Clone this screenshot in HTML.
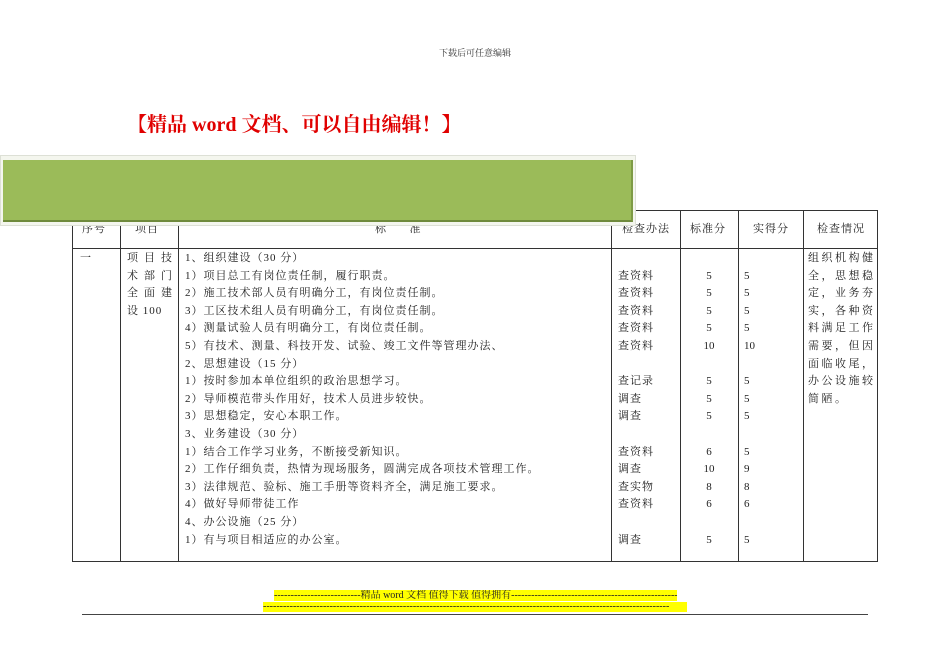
<!DOCTYPE html>
<html><head><meta charset="utf-8"><style>
*{margin:0;padding:0}
body{width:950px;height:672px;background:#fff;position:relative;overflow:hidden;font-family:"Liberation Serif","Noto Serif CJK SC",serif;color:#222}
.a{position:absolute;white-space:nowrap}
.h{position:absolute;background:#333;height:1px}
.v{position:absolute;background:#333;width:1px}
.t{font-size:11px;letter-spacing:1px;line-height:17.6px}
</style></head><body>
<div class="a" style="left:0;width:950px;top:46px;text-align:center;font-size:9px;color:#333">下载后可任意编辑</div>
<div class="a" style="left:127px;top:108px;font-size:20px;font-weight:bold;color:#e00000;font-family:'Liberation Serif','Noto Serif CJK SC',serif">【精品 word 文档、可以自由编辑！】</div>

<div class="h" style="left:72px;width:806px;top:210px"></div>
<div class="h" style="left:72px;width:806px;top:248px"></div>
<div class="h" style="left:72px;width:806px;top:561px"></div>
<div class="v" style="left:72px;top:210px;height:352px"></div>
<div class="v" style="left:120px;top:210px;height:352px"></div>
<div class="v" style="left:178px;top:210px;height:352px"></div>
<div class="v" style="left:611px;top:210px;height:352px"></div>
<div class="v" style="left:680px;top:210px;height:352px"></div>
<div class="v" style="left:738px;top:210px;height:352px"></div>
<div class="v" style="left:803px;top:210px;height:352px"></div>
<div class="v" style="left:877px;top:210px;height:352px"></div>

<div class="a t" style="left:82px;top:221px">序号</div>
<div class="a t" style="left:135px;top:221px">项目</div>
<div class="a t" style="left:375px;top:221px">标&nbsp;&nbsp;&nbsp;&nbsp;&nbsp;&nbsp;准</div>
<div class="a t" style="left:622px;top:221px">检查办法</div>
<div class="a t" style="left:690px;top:221px">标准分</div>
<div class="a t" style="left:753px;top:221px">实得分</div>
<div class="a t" style="left:817px;top:221px">检查情况</div>

<div class="a t" style="left:80px;top:250px">一</div>
<div class="a t" style="left:127px;top:250px;letter-spacing:6px">项目技<br>术部门<br>全面建<br><span style="letter-spacing:1px">设 100</span></div>
<div class="a t" style="left:185px;top:250px">1、组织建设（30 分）<br>1）项目总工有岗位责任制，履行职责。<br>2）施工技术部人员有明确分工，有岗位责任制。<br>3）工区技术组人员有明确分工，有岗位责任制。<br>4）测量试验人员有明确分工，有岗位责任制。<br>5）有技术、测量、科技开发、试验、竣工文件等管理办法、<br>2、思想建设（15 分）<br>1）按时参加本单位组织的政治思想学习。<br>2）导师模范带头作用好，技术人员进步较快。<br>3）思想稳定，安心本职工作。<br>3、业务建设（30 分）<br>1）结合工作学习业务，不断接受新知识。<br>2）工作仔细负责，热情为现场服务，圆满完成各项技术管理工作。<br>3）法律规范、验标、施工手册等资料齐全，满足施工要求。<br>4）做好导师带徒工作<br>4、办公设施（25 分）<br>1）有与项目相适应的办公室。</div>
<div class="a t" style="left:618px;top:250px"><br>查资料<br>查资料<br>查资料<br>查资料<br>查资料<br><br>查记录<br>调查<br>调查<br><br>查资料<br>调查<br>查实物<br>查资料<br><br>调查</div>
<div class="a t" style="left:680px;width:58px;top:250px;text-align:center;letter-spacing:0"><br>5<br>5<br>5<br>5<br>10<br><br>5<br>5<br>5<br><br>6<br>10<br>8<br>6<br><br>5</div>
<div class="a t" style="left:744px;top:250px;letter-spacing:0"><br>5<br>5<br>5<br>5<br>10<br><br>5<br>5<br>5<br><br>5<br>9<br>8<br>6<br><br>5</div>
<div class="a t" style="left:808px;top:250px;letter-spacing:2.5px">组织机构健<br>全，思想稳<br>定，业务夯<br>实，各种资<br>料满足工作<br>需要，但因<br>面临收尾，<br>办公设施较<br>简陋。</div>

<div class="a" style="left:0;top:155px;width:636px;height:71px;background:#f4f6ee;border:1px solid #dde0d6;box-sizing:border-box"></div>
<div class="a" style="left:3px;top:160px;width:630px;height:62px;background:#9bbb59;border-right:2px solid #7d9a45;border-bottom:2px solid #6f8a3c;box-sizing:border-box"></div>

<div class="a" style="left:274px;top:590px;height:11px;width:403px;background:#ffff00;font-size:10px;line-height:11px;overflow:hidden">--------------------------精品 word 文档 值得下载 值得拥有---------------------------------------------------------</div>
<div class="a" style="left:263px;top:602px;height:10px;width:424px;background:#ffff00;font-size:10px;line-height:9px;overflow:hidden">--------------------------------------------------------------------------------------------------------------------------</div>
<div class="h" style="left:82px;width:786px;top:614px;background:#444"></div>
</body></html>
